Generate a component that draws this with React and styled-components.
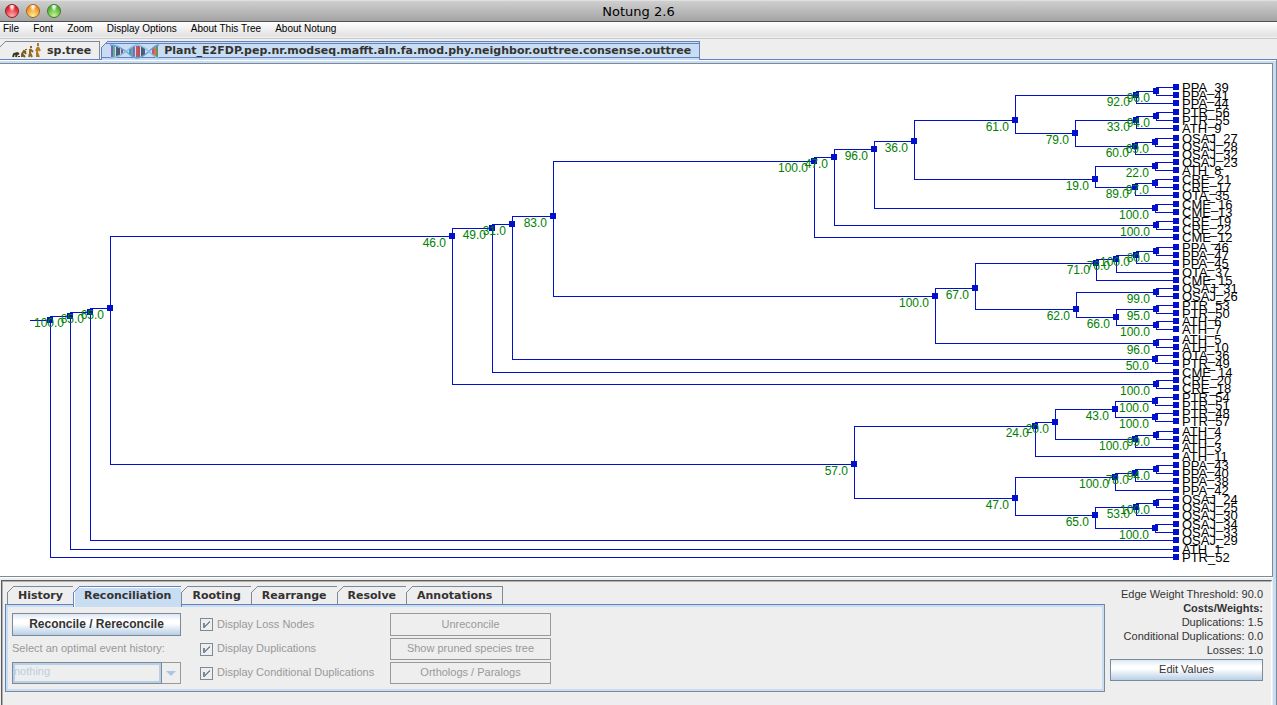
import React from 'react';
import styled, { createGlobalStyle, css } from 'styled-components';

const ui = '"Liberation Sans", Arial, sans-serif';
const lucida = '"DejaVu Sans", sans-serif';

const GlobalStyle = createGlobalStyle`
  *, *::before, *::after { box-sizing: border-box; }
  body { margin: 0; background: #eeeeee; }
  button, select, input { font: inherit; margin: 0; }
`;

const Window = styled.div`
  display: flex;
  flex-direction: column;
  min-height: 100vh;
  background: #eeeeee;
  font: 11px/14px ${ui};
  color: #333333;
`;

const TitleBar = styled.header`
  position: relative;
  display: flex;
  align-items: center;
  justify-content: center;
  height: 22px;
  border-top: 1px solid #e0e0e0;
  border-bottom: 1px solid #515151;
  background: linear-gradient(#cfcfcf, #a4a4a4);
`;

const Title = styled.h1`
  margin: 0;
  padding-top: 2px;
  font: 13px/20px ${lucida};
  color: #000000;
`;

const Lights = styled.div`
  position: absolute;
  left: 5px;
  top: 3px;
  display: flex;
  gap: 7px;
`;

const Light = styled.button`
  width: 14px;
  height: 14px;
  padding: 0;
  border: 1px solid ${(p) => p.$edge};
  border-radius: 50%;
  background:
    radial-gradient(ellipse at 50% 8%, rgba(255, 255, 255, 0.9) 0 12%, transparent 38%),
    radial-gradient(circle at 50% 90%, ${(p) => p.$glow} 0, ${(p) => p.$tone} 70%);
`;

const MenuBar = styled.nav`
  display: flex;
  align-items: center;
  gap: 14px;
  height: 17px;
  padding: 0 3px 3px;
  border-bottom: 1px solid #c9c9c9;
  background: linear-gradient(#ffffff, #e2e2e2 14px, #eeeeee 15px);
`;

const MenuItem = styled.button`
  padding: 0;
  border: 0;
  background: none;
  font: 10px/12px ${ui};
  color: #000000;
`;

const corner = css`
  &::before {
    content: '';
    position: absolute;
    left: -1px;
    top: -1px;
    width: 7px;
    height: 7px;
    background: linear-gradient(135deg, #eeeeee 43%, ${(p) => (p.$active ? '#6382bf' : '#7a8a99')} 44% 54%, transparent 55%);
  }
`;

const TabButton = styled.button`
  position: relative;
  display: flex;
  align-items: center;
  height: 18px;
  padding: 0 10px;
  border: 1px solid ${(p) => (p.$active ? '#6382bf' : '#7a8a99')};
  border-bottom: 0;
  margin-left: -1px;
  background: ${(p) => (p.$active ? '#c8ddf2' : '#eeeeee')};
  font: bold 11px/16px ${lucida};
  color: #333333;
  white-space: nowrap;
  ${corner}
`;

const DocTabs = styled.div`
  display: flex;
  align-items: flex-end;
  gap: 2px;
  height: 20px;
  padding-top: 2px;
`;

const DocTab = styled(TabButton)`
  padding: 0 ${(p) => (p.$active ? '8px' : '8px 0 12px')};
  gap: ${(p) => (p.$active ? '5px' : '6px')};
  ${(p) =>
    p.$active &&
    css`
      margin-bottom: -1px;
      height: 19px;
      box-shadow: inset 0 1px #c8ddf2, inset 0 2px #6382bf;
      background: linear-gradient(#c8ddf2 15px, #6382bf 15px 16px, #c8ddf2 16px);
    `}
`;

const DocFrame = styled.main`
  flex: 1;
  display: flex;
  flex-direction: column;
  padding: 3px 3px 0 0;
  border-top: 1px solid #6382bf;
  border-right: 1px solid #7a8a99;
  background: #c8ddf2;
  box-shadow: inset 0 1px #ffffff;
`;

const Content = styled.div`
  flex: 1;
  display: flex;
  flex-direction: column;
  background: #eeeeee;
`;

const Canvas = styled.section`
  border: solid #7a8a99;
  border-width: 1px 1px 1px 0;
  margin-bottom: 3px;
  background: #ffffff;
  box-shadow: 0 1px #ffffff;
  overflow: hidden;
`;

const TreeSvg = styled.svg`
  display: block;
  text.leaf { font: 13px ${ui}; fill: #000000; }
  text.weight { font: 12px ${ui}; fill: #008000; text-anchor: end; }
  rect, path { fill: #0010cc; shape-rendering: crispEdges; }
  path { fill: none; stroke: #0010cc; }
`;

const Tools = styled.section`
  flex: 1;
  display: flex;
  align-items: flex-start;
  gap: 5px;
  margin: 0 1px;
  padding: 4px 8px 12px 2px;
  border-top: 2px groove #b0b0b0;
  border-left: 2px groove #b0b0b0;
  border-right: 1px solid #ffffff;
`;

const Tabbed = styled.div`
  flex: 1;
  min-width: 0;
`;

const ToolTabs = styled.div`
  display: flex;
  padding-left: 3px;
`;

const ToolTab = styled(TabButton)`
  ${(p) =>
    p.$active &&
    css`
      margin-bottom: -3px;
      height: 21px;
      padding-bottom: 3px;
      box-shadow: inset 1px 1px #ffffff;
    `}
`;

const ToolPanel = styled.div`
  display: grid;
  grid-template-columns: 169px 209px 161px;
  grid-template-rows: 23px 22px 22px;
  row-gap: 2px;
  align-items: stretch;
  border: 1px solid #7a8a99;
  border-top-color: #6382bf;
  border-left-color: #6382bf;
  outline: 2px solid #c8ddf2;
  outline-offset: -3px;
  padding: 8px 6px 7px;
  box-shadow: inset 1px 1px #ffffff;
`;

const Button = styled.button`
  width: 100%;
  height: 100%;
  padding: 0 0 2px;
  border: 1px solid #7a8a99;
  background: linear-gradient(#dde8f3, #ffffff 30%, #ffffff 45%, #b8cfe5);
  font: ${(p) => (p.$strong ? 'bold 12px' : '11px')}/14px ${ui};
  color: #333333;
  &:disabled { border-color: #999999; background: #eeeeee; color: #999999; }
`;

const HistoryLabel = styled.label`
  padding-top: 3px;
  color: #999999;
  white-space: nowrap;
`;

const Combo = styled.div`
  display: grid;
  grid-template-columns: 1fr;
  border: 1px solid #999999;
  position: relative;
`;

const Select = styled.select`
  appearance: none;
  width: 150px;
  margin: -1px;
  padding: 0 0 4px 1px;
  border: 1px solid #7a8a99;
  border-radius: 0;
  outline: 2px solid #b8cfe5;
  outline-offset: -3px;
  background: #eeeeee;
  color: #b8cfe5;
  &:disabled { color: #b8cfe5; opacity: 1; }
`;

const Arrow = styled.svg`
  position: absolute;
  right: 4px;
  top: 8px;
`;

const CheckLabel = styled.label`
  display: flex;
  align-items: center;
  gap: 4px;
  padding-left: 19px;
  color: #999999;
  white-space: nowrap;
`;

const CheckBox = styled.input`
  appearance: none;
  width: 13px;
  height: 13px;
  flex: none;
  border: 1px solid #7a8a99;
  background:
    linear-gradient(#7a8a99, #7a8a99) 2px 4px / 2px 5px no-repeat,
    linear-gradient(135deg, transparent 42%, #7a8a99 43% 60%, transparent 61%) 3px 2px / 6px 7px no-repeat;
`;

const CheckText = styled.span`
  padding-bottom: 2px;
`;

const Costs = styled.aside`
  width: 153px;
  padding-top: 1px;
  text-align: right;
  white-space: nowrap;
`;

const CostLine = styled.p`
  margin: 0;
  font-weight: ${(p) => (p.$strong ? 'bold' : 'normal')};
`;

const EditRow = styled.div`
  height: 22px;
  margin-top: 2px;
`;

const LEAF_X = 1176;

const leaf = (name, y) => ({ name, x: LEAF_X, y });
const node = (x, y, weight, ...children) => ({ x, y, weight, children });

const upper = node(814, 161, '100.0',
  node(834, 157, '47.0',
    node(874, 149, '96.0',
      node(914, 141, '36.0',
        node(1015, 120, '61.0',
          node(1136, 95, '92.0',
            node(1156, 91, '96.0', leaf('PPA_39', 87), leaf('PPA_41', 95)),
            leaf('PPA_44', 103)),
          node(1075, 133, '79.0',
            node(1136, 120, '33.0',
              node(1156, 116, '94.0', leaf('PTR_56', 112), leaf('PTR_55', 120)),
              leaf('ATH_9', 128)),
            node(1135, 146, '60.0',
              node(1155, 142, '69.0', leaf('OSAJ_27', 138), leaf('OSAJ_28', 146)),
              leaf('OSAJ_32', 154)))),
        node(1095, 179, '19.0',
          node(1155, 166, '22.0', leaf('OSAJ_23', 162), leaf('ATH_8', 170)),
          node(1135, 187, '89.0',
            node(1155, 183, '97.0', leaf('CRE_21', 179), leaf('CRE_17', 187)),
            leaf('OTA_35', 195)))),
      node(1155, 208, '100.0', leaf('CME_16', 204), leaf('CME_13', 212))),
    node(1156, 225, '100.0', leaf('CRE_19', 221), leaf('CRE_22', 229))),
  leaf('CME_12', 237));

const middle = node(935, 296, '100.0',
  node(975, 288, '67.0',
    node(1096, 263, '71.0',
      node(1116, 259, '76.0',
        node(1136, 255, '100.0',
          node(1156, 251, '80.0', leaf('PPA_46', 247), leaf('PPA_47', 255)),
          leaf('PPA_45', 263)),
        leaf('OTA_37', 272)),
      leaf('CME_15', 280)),
    node(1076, 309, '62.0',
      node(1156, 292, '99.0', leaf('OSAJ_31', 288), leaf('OSAJ_26', 296)),
      node(1116, 317, '66.0',
        node(1156, 309, '95.0', leaf('PTR_53', 305), leaf('PTR_50', 313)),
        node(1156, 325, '100.0', leaf('ATH_6', 321), leaf('ATH_7', 329))))),
  node(1156, 343, '96.0', leaf('ATH_5', 339), leaf('ATH_10', 347)));

const lower = node(854, 464, '57.0',
  node(1035, 426, '24.0',
    node(1055, 422, '20.0',
      node(1115, 409, '43.0',
        node(1155, 401, '100.0', leaf('PTR_54', 397), leaf('PTR_51', 405)),
        node(1155, 417, '100.0', leaf('PTR_48', 413), leaf('PTR_57', 421))),
      node(1135, 439, '100.0',
        node(1156, 435, '99.0', leaf('ATH_4', 431), leaf('ATH_2', 439)),
        leaf('ATH_3', 447))),
    leaf('ATH_11', 456)),
  node(1015, 498, '47.0',
    node(1115, 477, '100.0',
      node(1135, 473, '78.0',
        node(1156, 469, '94.0', leaf('PPA_43', 465), leaf('PPA_40', 473)),
        leaf('PPA_38', 481)),
      leaf('PPA_42', 490)),
    node(1095, 515, '65.0',
      node(1136, 507, '53.0',
        node(1156, 503, '100.0', leaf('OSAJ_24', 499), leaf('OSAJ_25', 507)),
        leaf('OSAJ_30', 515)),
      node(1155, 528, '100.0', leaf('OSAJ_34', 524), leaf('OSAJ_33', 532)))));

const root = node(50, 320, null,
  node(70, 316, '100.0',
    node(90, 312, '85.0',
      node(110, 308, '65.0',
        node(452, 236, '46.0',
          node(492, 228, '49.0',
            node(512, 224, '31.0',
              node(553, 216, '83.0', upper, middle),
              node(1155, 359, '50.0', leaf('OTA_36', 355), leaf('PTR_49', 363))),
            leaf('CME_14', 372)),
          node(1156, 384, '100.0', leaf('CRE_20', 380), leaf('CRE_18', 388))),
        lower),
      leaf('OSAJ_29', 540)),
    leaf('ATH_1', 549)),
  leaf('PTR_52', 557));

const flatten = (n) => [n, ...(n.children || []).flatMap(flatten)];
const nodes = flatten(root);

function Tree() {
  return (
    <TreeSvg width="1260" height="512" viewBox="0 64 1260 512" role="img" aria-label="Gene tree">
      <path d="M30 320.5H50" />
      {nodes.filter((n) => n.children).map((n) => n.children.map((c) => (
        <path key={`${c.x}-${c.y}`} d={`M${n.x + 0.5} ${n.y + 0.5}V${c.y + 0.5}H${c.x}`} />
      )))}
      {nodes.map((n) => <rect key={`${n.x}-${n.y}`} x={n.x - 3} y={n.y - 3} width="6" height="6" />)}
      {nodes.map((n) => (n.name
        ? <text key={n.name} className="leaf" x={n.x + 6} y={n.y + 5}>{n.name}</text>
        : n.weight && <text key={`${n.x}-${n.y}`} className="weight" x={n.x - 6} y={n.y + 11}>{n.weight}</text>))}
    </TreeSvg>
  );
}

const walkers = [
  'M1 14L2 11L5 10L7 11M5 10L4 14M7 13V14',
  'M10 14L10 11L12 8L14 9M10 11L13 14M12 8L14 11M14 6V7',
  'M17 14L18 10L18 6M18 10L20 14M18 6L21 9M19 3V5',
  'M25 14V9L26 4M25 9L27 14M26 4L28 8M26 4L24 8M26 0V3',
];
const walkerTones = ['#3f3a1c', '#7b5a1c', '#93661f', '#b07a24'];

function EvolutionIcon() {
  return (
    <svg width="29" height="15" viewBox="0 0 29 15" fill="none" strokeWidth="2" aria-hidden="true">
      {walkers.map((d, i) => <path key={d} d={d} stroke={walkerTones[i]} />)}
    </svg>
  );
}

const rungs = [
  [2, 2, 13, '#6a1fb0'], [4, 2, 13, '#20b040'], [7, 3, 12, '#202060'], [9, 4, 11, '#202020'],
  [12, 5, 10, '#7a2020'], [20, 4, 11, '#2a60d0'], [22, 3, 12, '#30a040'], [24, 2, 13, '#7030c0'],
  [27, 2, 13, '#c02020'], [29, 2, 13, '#a02020'], [32, 3, 12, '#202020'], [34, 4, 11, '#202060'],
  [43, 4, 11, '#c02020'], [45, 3, 12, '#d05020'], [47, 2, 13, '#407020'],
];

function DnaIcon() {
  return (
    <svg width="49" height="15" viewBox="0 0 49 15" fill="none" aria-hidden="true">
      {rungs.map(([x, a, b, c]) => <path key={x} d={`M${x} ${a}V${b}`} stroke={c} strokeWidth="1.4" />)}
      <path d="M0 1C7 1 11 4 16 7.5S23 14 27 14S35 11 39 7.5S45 1 49 1" stroke="#5ba3e0" strokeWidth="1.3" />
      <path d="M0 14C7 14 11 11 16 7.5S23 1 27 1S35 4 39 7.5S45 14 49 14" stroke="#86bdea" strokeWidth="1.3" />
    </svg>
  );
}

const menus = ['File', 'Font', 'Zoom', 'Display Options', 'About This Tree', 'About Notung'];
const toolTabs = ['History', 'Reconciliation', 'Rooting', 'Rearrange', 'Resolve', 'Annotations'];

function Check({ children }) {
  return (
    <CheckLabel>
      <CheckBox type="checkbox" defaultChecked disabled />
      <CheckText>{children}</CheckText>
    </CheckLabel>
  );
}

export default function App() {
  return (
    <Window>
      <GlobalStyle />
      <TitleBar>
        <Lights>
          <Light aria-label="Close" $edge="#8e1f22" $glow="#ffb0b0" $tone="#e0202c" />
          <Light aria-label="Minimize" $edge="#a3651a" $glow="#ffee90" $tone="#ee9020" />
          <Light aria-label="Zoom" $edge="#3c7a26" $glow="#c8f590" $tone="#4fb035" />
        </Lights>
        <Title>Notung 2.6</Title>
      </TitleBar>
      <MenuBar>
        {menus.map((m) => <MenuItem key={m}>{m}</MenuItem>)}
      </MenuBar>
      <DocTabs role="tablist">
        <DocTab role="tab" aria-selected="false"><EvolutionIcon />sp.tree</DocTab>
        <DocTab role="tab" aria-selected="true" $active>
          <DnaIcon />Plant_E2FDP.pep.nr.modseq.mafft.aln.fa.mod.phy.neighbor.outtree.consense.outtree
        </DocTab>
      </DocTabs>
      <DocFrame>
        <Content>
          <Canvas><Tree /></Canvas>
          <Tools>
            <Tabbed>
              <ToolTabs role="tablist">
                {toolTabs.map((t) => (
                  <ToolTab key={t} role="tab" aria-selected={t === 'Reconciliation'} $active={t === 'Reconciliation'}>{t}</ToolTab>
                ))}
              </ToolTabs>
              <ToolPanel role="tabpanel">
                <Button $strong>Reconcile / Rereconcile</Button>
                <Check>Display Loss Nodes</Check>
                <Button disabled>Unreconcile</Button>
                <HistoryLabel htmlFor="history">Select an optimal event history:</HistoryLabel>
                <Check>Display Duplications</Check>
                <Button disabled>Show pruned species tree</Button>
                <Combo>
                  <Select id="history" disabled defaultValue="nothing">
                    <option>nothing</option>
                  </Select>
                  <Arrow width="10" height="5" viewBox="0 0 10 5" aria-hidden="true"><path d="M0 0H10L5 5Z" fill="#a9c6e3" /></Arrow>
                </Combo>
                <Check>Display Conditional Duplications</Check>
                <Button disabled>Orthologs / Paralogs</Button>
              </ToolPanel>
            </Tabbed>
            <Costs>
              <CostLine>Edge Weight Threshold: 90.0</CostLine>
              <CostLine $strong>Costs/Weights:</CostLine>
              <CostLine>Duplications: 1.5</CostLine>
              <CostLine>Conditional Duplications: 0.0</CostLine>
              <CostLine>Losses: 1.0</CostLine>
              <EditRow><Button>Edit Values</Button></EditRow>
            </Costs>
          </Tools>
        </Content>
      </DocFrame>
    </Window>
  );
}
